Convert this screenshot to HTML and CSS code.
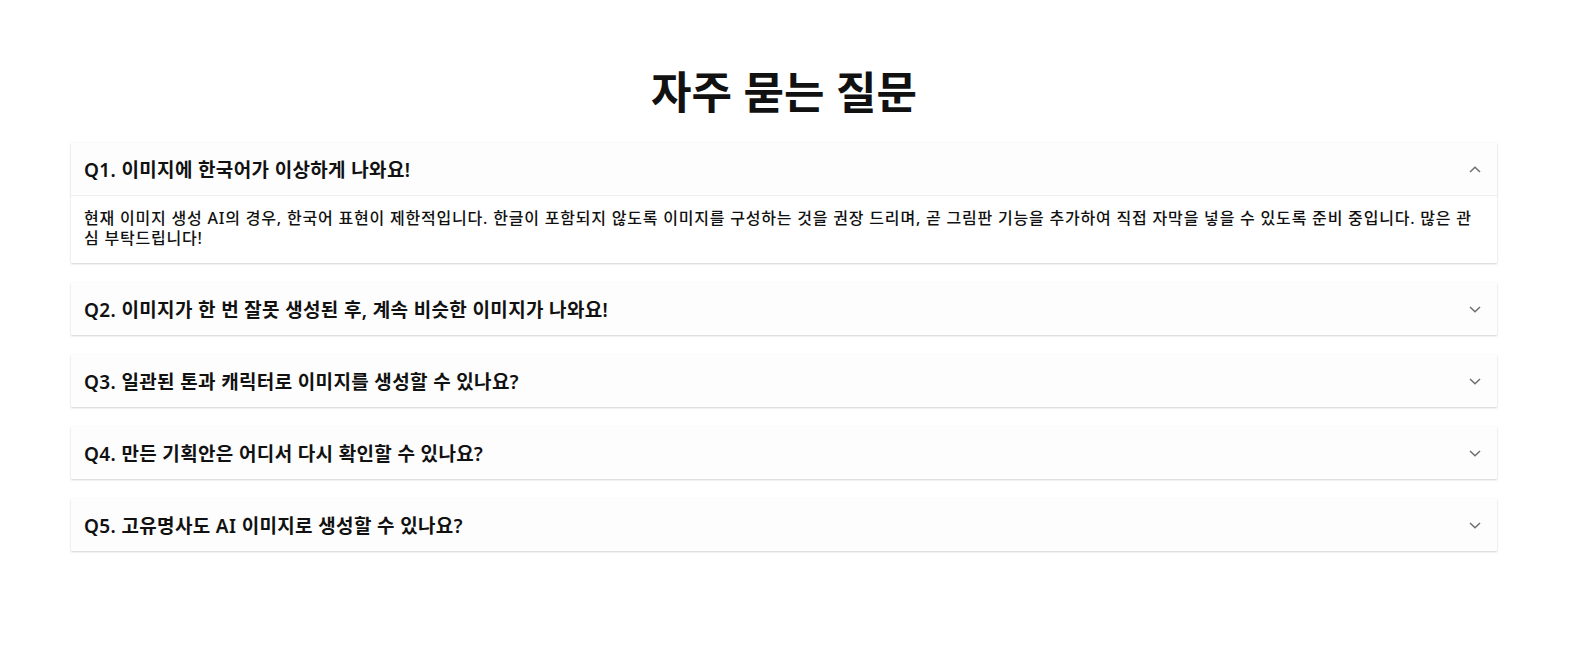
FILE: index.html
```html
<!DOCTYPE html>
<html lang="ko">
<head>
<meta charset="utf-8">
<title>자주 묻는 질문</title>
<link rel="stylesheet" href="styles.css">
</head>
<body>
<main class="faq">
  <h1 class="faq-title">자주 묻는 질문</h1>
  <div class="faq-list">
    <div class="faq-item open">
      <div class="faq-q">
        <span class="faq-q-text">Q1. 이미지에 한국어가 이상하게 나와요!</span>
        <svg class="chev" width="12" height="7" viewBox="0 0 12 7"><path d="M1 6 L6 1.2 L11 6" fill="none" stroke="#6f6f6f" stroke-width="1.5"/></svg>
      </div>
      <div class="faq-a">현재 이미지 생성 AI의 경우, 한국어 표현이 제한적입니다. 한글이 포함되지 않도록 이미지를 구성하는 것을 권장 드리며, 곧 그림판 기능을 추가하여 직접 자막을 넣을 수 있도록 준비 중입니다. 많은 관심 부탁드립니다!</div>
    </div>
    <div class="faq-item">
      <div class="faq-q">
        <span class="faq-q-text">Q2. 이미지가 한 번 잘못 생성된 후, 계속 비슷한 이미지가 나와요!</span>
        <svg class="chev" width="12" height="7" viewBox="0 0 12 7"><path d="M1 1 L6 5.8 L11 1" fill="none" stroke="#6f6f6f" stroke-width="1.5"/></svg>
      </div>
    </div>
    <div class="faq-item">
      <div class="faq-q">
        <span class="faq-q-text">Q3. 일관된 톤과 캐릭터로 이미지를 생성할 수 있나요?</span>
        <svg class="chev" width="12" height="7" viewBox="0 0 12 7"><path d="M1 1 L6 5.8 L11 1" fill="none" stroke="#6f6f6f" stroke-width="1.5"/></svg>
      </div>
    </div>
    <div class="faq-item">
      <div class="faq-q">
        <span class="faq-q-text">Q4. 만든 기획안은 어디서 다시 확인할 수 있나요?</span>
        <svg class="chev" width="12" height="7" viewBox="0 0 12 7"><path d="M1 1 L6 5.8 L11 1" fill="none" stroke="#6f6f6f" stroke-width="1.5"/></svg>
      </div>
    </div>
    <div class="faq-item">
      <div class="faq-q">
        <span class="faq-q-text">Q5. 고유명사도 AI 이미지로 생성할 수 있나요?</span>
        <svg class="chev" width="12" height="7" viewBox="0 0 12 7"><path d="M1 1 L6 5.8 L11 1" fill="none" stroke="#6f6f6f" stroke-width="1.5"/></svg>
      </div>
    </div>
  </div>
</main>
</body>
</html>
```
FILE: styles.css
```css
* { box-sizing: border-box; }
html, body { margin: 0; padding: 0; background: #ffffff; }
body {
  font-family: "Noto Sans", "Noto Sans CJK KR", sans-serif;
  color: #111111;
}
.faq {
  padding: 68px 97px 40px 71px;
}
.faq-title {
  margin: 0 0 27px 0;
  font-size: 44px;
  line-height: 48px;
  font-weight: 700;
  text-align: center;
  color: #111;
}
.faq-list {
  display: flex;
  flex-direction: column;
  gap: 20px;
}
.faq-item {
  background: #ffffff;
  box-shadow: 0 1px 2px rgba(0,0,0,0.17), 0 0 2px rgba(0,0,0,0.04);
}
.faq-q {
  height: 52px;
  display: flex;
  align-items: center;
  justify-content: space-between;
  padding: 0 16px 0 13px;
  background: #fdfdfd;
}
.faq-item.open .faq-q {
  box-shadow: 0 1px 1px rgba(0,0,0,0.06);
  position: relative;
}
.faq-q-text {
  font-size: 19px;
  letter-spacing: 0.35px;
  font-weight: 600;
  color: #111;
}
.chev { display: block; }
.faq-a {
  padding: 13px 14px 15px 13px;
  font-size: 16px;
  letter-spacing: 0.8px;
  line-height: 20px;
  font-weight: 500;
  color: #111;
}
```
